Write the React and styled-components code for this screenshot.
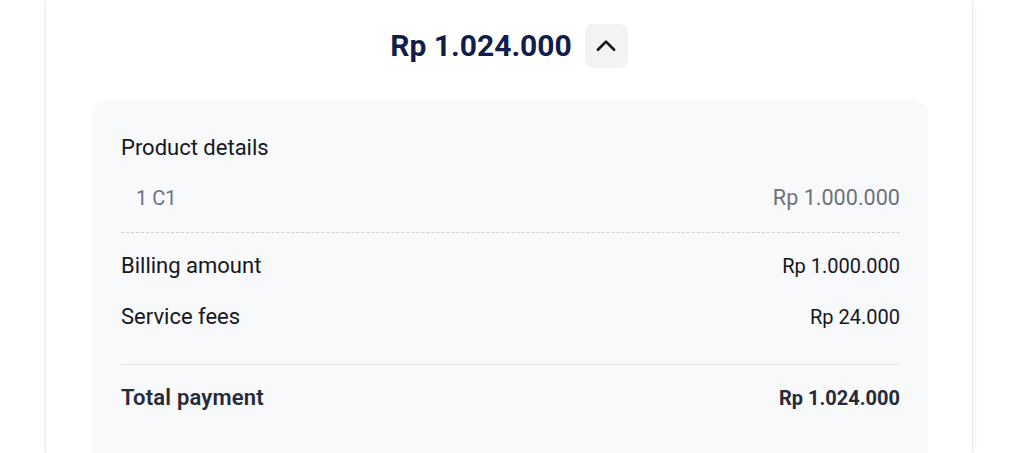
import React from "react";
import styled, { createGlobalStyle } from "styled-components";

const Global = createGlobalStyle`
  html, body { margin: 0; padding: 0; background: #ffffff; }
  body { font-family: Roboto, "Noto Sans", sans-serif; overflow: hidden; }
`;

const Page = styled.div`
  height: 453px;
  padding: 0 51px 0 45px;
  box-sizing: border-box;
`;

const Card = styled.div`
  height: 100%;
  background: #ffffff;
  border-left: 1px solid #ececee;
  border-right: 1px solid #ececee;
  box-shadow: 0 0 6px rgba(0, 0, 0, 0.06);
  padding: 24px 44px 0 46px;
  box-sizing: border-box;
  display: flex;
  flex-direction: column;
  gap: 32px;
`;

const Header = styled.div`
  display: flex;
  align-items: center;
  justify-content: center;
  gap: 13px;
  padding-right: 2px;
`;

const Amount = styled.div`
  font-size: 30px;
  line-height: 36px;
  font-weight: 700;
  color: #121d4b;
`;

const ToggleButton = styled.button`
  width: 43px;
  height: 44px;
  border: none;
  border-radius: 8px;
  background: #f2f3f5;
  display: flex;
  align-items: center;
  justify-content: center;
  padding: 0;
  color: #15161a;
`;

const Panel = styled.div`
  flex: 1;
  background: #f8f9fb;
  border-radius: 16px 16px 0 0;
  padding: 34px 28px 0 29px;
  display: flex;
  flex-direction: column;
`;

const SectionTitle = styled.div`
  font-size: 22px;
  line-height: 28px;
  color: #15171e;
`;

const Row = styled.div`
  display: flex;
  justify-content: space-between;
  align-items: center;
  margin-top: ${(p) => p.$gap}px;
  padding-left: ${(p) => (p.$indent ? 15 : 0)}px;
`;

const Label = styled.div`
  font-size: ${(p) => (p.$muted ? 20 : 22)}px;
  line-height: ${(p) => (p.$muted ? 24 : 28)}px;
  font-weight: ${(p) => (p.$bold ? 600 : 400)};
  letter-spacing: ${(p) => (p.$bold ? "0.2px" : "0")};
  color: ${(p) => (p.$muted ? "#6e717c" : p.$bold ? "#262a3a" : "#15171e")};
`;

const Value = styled.div`
  font-size: ${(p) => (p.$muted ? 21.6 : 20)}px;
  line-height: 24px;
  font-weight: ${(p) => (p.$bold ? 700 : 400)};
  color: ${(p) => (p.$muted ? "#6e717c" : p.$bold ? "#262a3a" : "#15171e")};
`;

const Divider = styled.div`
  margin-top: ${(p) => p.$gap}px;
  border-top: 1px ${(p) => (p.$dashed ? "dashed #cfd2d8" : "solid #e3e5e9")};
`;

function ChevronUp() {
  return (
    <svg width="26" height="26" viewBox="0 0 24 24" fill="none" stroke="currentColor" strokeWidth="2.4" strokeLinecap="round" strokeLinejoin="round">
      <path d="M4.5 15.5L12 8l7.5 7.5" />
    </svg>
  );
}

export default function App() {
  return (
    <>
      <Global />
      <Page>
        <Card>
          <Header>
            <Amount>Rp 1.024.000</Amount>
            <ToggleButton aria-label="collapse">
              <ChevronUp />
            </ToggleButton>
          </Header>
          <Panel>
            <SectionTitle>Product details</SectionTitle>
            <Row $gap={24} $indent>
              <Label $muted>1 C1</Label>
              <Value $muted>Rp 1.000.000</Value>
            </Row>
            <Divider $dashed $gap={22} />
            <Row $gap={19}>
              <Label>Billing amount</Label>
              <Value>Rp 1.000.000</Value>
            </Row>
            <Row $gap={23}>
              <Label>Service fees</Label>
              <Value>Rp 24.000</Value>
            </Row>
            <Divider $gap={33} />
            <Row $gap={19}>
              <Label $bold>Total payment</Label>
              <Value $bold>Rp 1.024.000</Value>
            </Row>
          </Panel>
        </Card>
      </Page>
    </>
  );
}
